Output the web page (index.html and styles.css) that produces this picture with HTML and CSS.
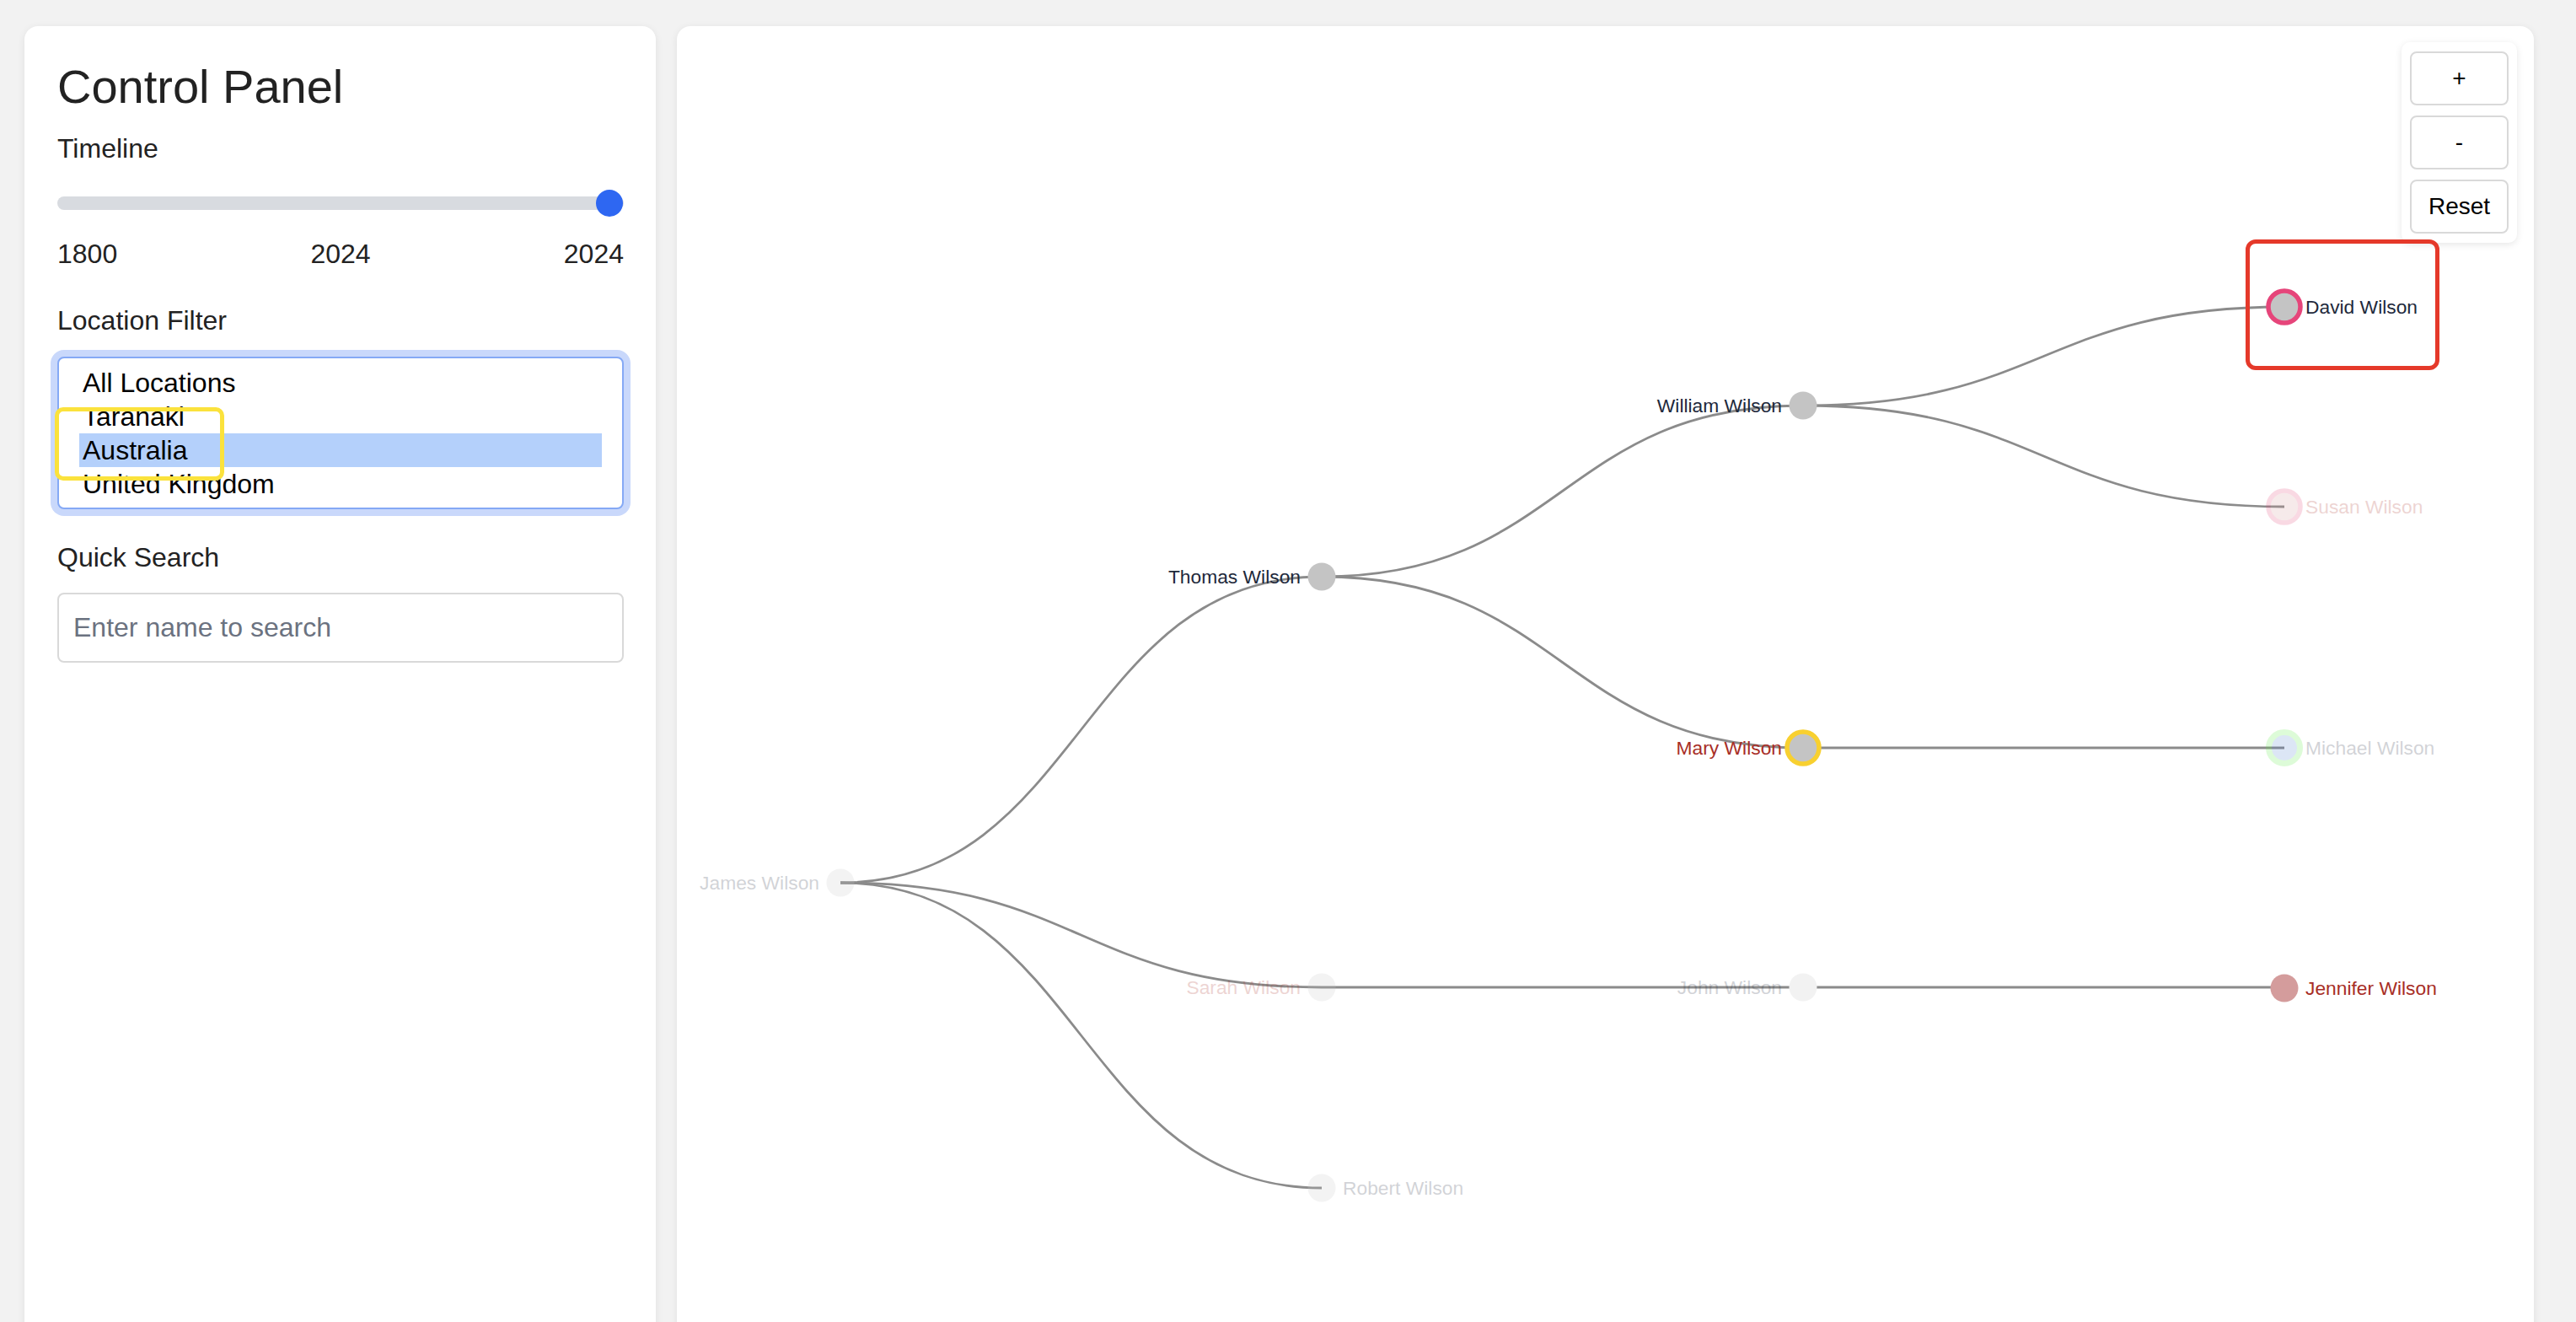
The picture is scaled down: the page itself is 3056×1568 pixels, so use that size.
FILE: index.html
```html
<!DOCTYPE html>
<html lang="en">
<head>
<meta charset="utf-8">
<title>Family Tree</title>
<link rel="stylesheet" href="styles.css">
</head>
<body>
<div class="app">
  <aside class="panel control">
    <h1 class="title">Control Panel</h1>
    <div class="label label-timeline">Timeline</div>
    <div class="slider">
      <div class="track"></div>
      <div class="thumb"></div>
    </div>
    <div class="years"><span>1800</span><span>2024</span><span>2024</span></div>
    <div class="label label-location">Location Filter</div>
    <div class="listbox">
      <div class="opt">All Locations</div>
      <div class="opt">Taranaki</div>
      <div class="opt selected">Australia</div>
      <div class="opt">United Kingdom</div>
      <span class="annot-yellow"></span>
    </div>
    <div class="label label-search">Quick Search</div>
    <div class="search">Enter name to search</div>
  </aside>
  <main class="panel tree">
    <svg class="tree-svg" width="2203" height="1560" viewBox="803 31 2203 1560">
      <g class="links">
        <path d="M997,1047 C1282.5,1047 1282.5,684 1568,684"/>
        <path d="M997,1047 C1282.5,1047 1282.5,1171 1568,1171"/>
        <path d="M997,1047 C1282.5,1047 1282.5,1409 1568,1409"/>
        <path d="M1568,684 C1853.5,684 1853.5,481 2139,481"/>
        <path d="M1568,684 C1853.5,684 1853.5,887 2139,887"/>
        <path d="M1568,1171 L2139,1171"/>
        <path d="M2139,481 C2424.5,481 2424.5,364 2710,364"/>
        <path d="M2139,481 C2424.5,481 2424.5,601 2710,601"/>
        <path d="M2139,887 L2710,887"/>
        <path d="M2139,1171 L2710,1171"/>
      </g>
      <g class="nodes">
        <g class="faded">
          <circle cx="997" cy="1047" r="16.5" class="c-gray"/>
          <text x="972" y="1054.5" class="t-left t-navy">James Wilson</text>
        </g>
        <g>
          <circle cx="1568" cy="684" r="16.5" class="c-gray"/>
          <text x="1543" y="691.5" class="t-left t-navy">Thomas Wilson</text>
        </g>
        <g class="faded">
          <circle cx="1568" cy="1171" r="16.5" class="c-gray"/>
          <text x="1543" y="1178.5" class="t-left t-red">Sarah Wilson</text>
        </g>
        <g class="faded">
          <circle cx="1568" cy="1409" r="16.5" class="c-gray"/>
          <text x="1593" y="1416.5" class="t-right t-navy">Robert Wilson</text>
        </g>
        <g>
          <circle cx="2139" cy="481" r="16.5" class="c-gray"/>
          <text x="2114" y="488.5" class="t-left t-navy">William Wilson</text>
        </g>
        <g>
          <circle cx="2139" cy="887" r="19" class="c-gray s-yellow"/>
          <text x="2114" y="894.5" class="t-left t-red">Mary Wilson</text>
        </g>
        <g>
          <circle cx="2139" cy="1171" r="16.5" class="c-light"/>
          <text x="2114" y="1178.5" class="t-left t-navy faded">John Wilson</text>
        </g>
        <g>
          <circle cx="2710" cy="364" r="19" class="c-gray s-pink"/>
          <text x="2735" y="371.5" class="t-right t-navy">David Wilson</text>
        </g>
        <g class="faded">
          <circle cx="2710" cy="601" r="19" class="c-rose s-pink"/>
          <text x="2735" y="608.5" class="t-right t-red">Susan Wilson</text>
        </g>
        <g class="faded">
          <circle cx="2710" cy="887" r="18.5" class="c-blue s-green"/>
          <text x="2735" y="894.5" class="t-right t-navy">Michael Wilson</text>
        </g>
        <g>
          <circle cx="2710" cy="1172" r="16.5" class="c-rose"/>
          <text x="2735" y="1179.5" class="t-right t-red">Jennifer Wilson</text>
        </g>
      </g>
    </svg>
    <div class="zoom-controls">
      <button class="zbtn">+</button>
      <button class="zbtn">-</button>
      <button class="zbtn">Reset</button>
    </div>
    <span class="annot-red"></span>
  </main>
</div>
</body>
</html>
```

FILE: styles.css
```css
html, body {
  margin: 0;
  padding: 0;
  overflow: hidden;
  background: #f2f2f2;
}

body {
  font-family: "Liberation Sans", Arial, sans-serif;
  color: #222;
}

.app {
  display: flex;
  gap: 25px;
  padding: 31px 0 0 29px;
}

.panel {
  background: #fff;
  border-radius: 16px;
  box-shadow: 0 2px 10px rgba(0, 0, 0, 0.08);
  height: 1560px;
  box-sizing: border-box;
}

.control {
  width: 749px;
  padding: 40px 38px 0 39px;
  display: flex;
  flex-direction: column;
}

.title {
  margin: 0 0 23px 0;
  font-size: 56px;
  line-height: 64px;
  font-weight: 400;
  color: #222;
}

.label {
  font-size: 32px;
  line-height: 37px;
  color: #222;
}

.slider {
  position: relative;
  height: 32px;
  margin-top: 30px;
  display: flex;
  align-items: center;
  justify-content: flex-end;
  padding-right: 1px;
}

.track {
  position: absolute;
  left: 0;
  right: 0;
  top: 8px;
  height: 16px;
  border-radius: 8px;
  background: #d8dbe0;
}

.thumb {
  position: relative;
  width: 32px;
  height: 32px;
  border-radius: 50%;
  background: #2e67f2;
}

.years {
  display: flex;
  justify-content: space-between;
  margin-top: 26px;
  font-size: 32px;
  line-height: 37px;
  color: #222;
}

.label-location {
  margin-top: 42px;
}

.listbox {
  position: relative;
  margin-top: 24px;
  height: 181px;
  box-sizing: border-box;
  border: 2px solid #85a9f5;
  border-radius: 8px;
  box-shadow: 0 0 0 8px #c9d8fb;
  padding: 9px 24px 8px 24px;
  background: #fff;
}

.opt {
  font-size: 32px;
  line-height: 40px;
  height: 40px;
  padding-left: 4px;
  color: #000;
  white-space: nowrap;
}

.opt.selected {
  background: #b4d0fb;
}

.annot-yellow {
  position: absolute;
  left: -5px;
  top: 58px;
  width: 201px;
  height: 87px;
  box-sizing: border-box;
  border: 5px solid #fbe23c;
  border-radius: 10px;
}

.label-search {
  margin-top: 39px;
}

.search {
  margin-top: 23px;
  height: 83px;
  box-sizing: border-box;
  border: 2px solid #d9d9d9;
  border-radius: 8px;
  padding: 0 17px;
  display: flex;
  align-items: center;
  font-size: 32px;
  color: #6b7280;
}

.tree {
  position: relative;
  width: 2203px;
  overflow: hidden;
}

.tree-svg {
  display: block;
}

.links path {
  fill: none;
  stroke: #8b8b8b;
  stroke-width: 2.8;
}

.nodes text {
  font-family: "Liberation Sans", Arial, sans-serif;
  font-size: 22.8px;
}

.t-left { text-anchor: end; }
.t-right { text-anchor: start; }
.t-navy { fill: #1e293b; }
.t-red { fill: #a82e26; }

.faded { opacity: 0.2; }

.c-gray { fill: #c4c4c4; }
.c-light { fill: #f2f2f2; }
.c-rose { fill: #d49c9c; }
.c-blue { fill: #5585d0; }

.s-yellow { stroke: #f8d030; stroke-width: 5.5; }
.s-pink { stroke: #e6457a; stroke-width: 5.5; }
.s-green { stroke: #5cf040; stroke-width: 7; }

.annot-red {
  position: absolute;
  left: 1861px;
  top: 253px;
  width: 230px;
  height: 155px;
  box-sizing: border-box;
  border: 5px solid #e5392a;
  border-radius: 12px;
}

.zoom-controls {
  position: absolute;
  top: 19px;
  right: 20px;
  display: flex;
  flex-direction: column;
  gap: 12px;
  padding: 11px 10px;
  background: #fff;
  border-radius: 10px;
  box-shadow: 0 2px 8px rgba(0, 0, 0, 0.1);
}

.zbtn {
  width: 117px;
  height: 64px;
  box-sizing: border-box;
  border: 2px solid #d9d9d9;
  border-radius: 8px;
  background: #fff;
  font-family: "Liberation Sans", Arial, sans-serif;
  font-size: 28px;
  color: #000;
  padding: 0;
}
```
